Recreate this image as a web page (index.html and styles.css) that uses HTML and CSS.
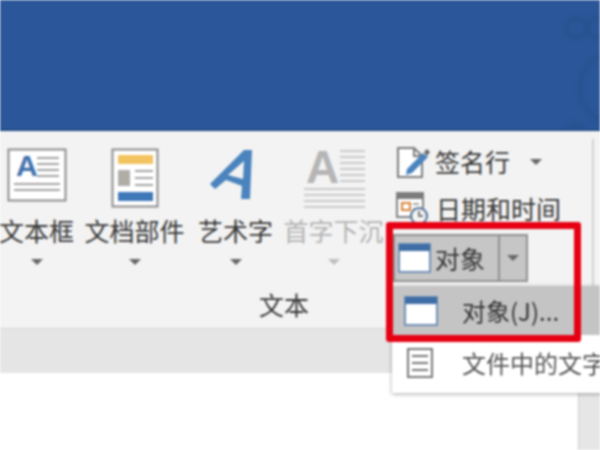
FILE: index.html
```html
<!DOCTYPE html>
<html lang="zh-CN">
<head>
<meta charset="utf-8">
<title>Word</title>
<link rel="stylesheet" href="styles.css">
</head>
<body>
<div class="app">
  <header class="titlebar">
    <svg class="pattern" width="90" height="131" viewBox="0 0 90 131"><g fill="none" stroke="#28528f" stroke-width="5"><circle cx="66" cy="28" r="10"/><circle cx="88" cy="28" r="10"/><circle cx="106" cy="88" r="36"/><circle cx="66" cy="132" r="8"/></g></svg>
  </header>
  <section class="ribbon">
    <div class="group">
      <div class="tools">
        <div class="tool tool-box">
          <div class="tool-icon">
            <svg width="60" height="54" viewBox="0 0 60 54"><rect x="1.5" y="1.5" width="57" height="51" fill="#fff" stroke="#8b8b8b" stroke-width="2"/><text class="svg-a" x="9" y="28" fill="#3f70ad">A</text><path d="M30 10h22M30 16h22M30 22h22M30 28h22M7 36h46M7 42h46" stroke="#a3a3a3" stroke-width="2"/></svg>
          </div>
          <span class="tool-label">文本框</span><i class="caret"></i>
        </div>
        <div class="tool tool-parts">
          <div class="tool-icon">
            <svg width="48" height="60" viewBox="0 0 48 60"><rect x="1.5" y="1.5" width="45" height="57" fill="#fff" stroke="#8b8b8b" stroke-width="2"/><rect x="7" y="7" width="35" height="9" fill="#f2c35f"/><rect x="7" y="22" width="12" height="16" fill="#b0aca6"/><path d="M24 23h18M24 30h18M24 37h18" stroke="#a3a3a3" stroke-width="2"/><rect x="7" y="44" width="35" height="9" fill="#3f78b8"/></svg>
          </div>
          <span class="tool-label">文档部件</span><i class="caret"></i>
        </div>
        <div class="tool tool-art">
          <div class="tool-icon">
            <svg class="art-icon" width="46" height="54" viewBox="0 0 46 54"><path d="M2 36 L36 2 H44 L42 51 H33 L34 38 L18 32 L7 41 Z M20 27 L35 31 L36 13 Z" fill="#4a83bd" fill-rule="evenodd"/></svg>
          </div>
          <span class="tool-label">艺术字</span><i class="caret"></i>
        </div>
        <div class="tool tool-drop tool-off">
          <div class="tool-icon">
            <svg class="drop-icon" width="62" height="60" viewBox="0 0 62 60"><text class="svg-drop" x="3" y="35" fill="#b5b5b5">A</text><path d="M37 3h25M37 9h25M37 15h25M37 21h25M37 27h25M37 33h25M1 41h61M1 47h61M1 53h61M1 59h61" stroke="#cacaca" stroke-width="2"/></svg>
          </div>
          <span class="tool-label">首字下沉</span><i class="caret"></i>
        </div>
        <div class="side-tools">
          <div class="side-row">
            <svg class="side-icon" width="34" height="34" viewBox="0 0 34 34"><path d="M2 3h16l8 8v21H2z" fill="#fff" stroke="#7b7b7b" stroke-width="2"/><path d="M18 3v8h8" fill="none" stroke="#7b7b7b" stroke-width="2"/><path d="M11 24 L27 8 l5 4 L16 28 l-6 2z" fill="#4a83bd"/><path d="M28 7l3-3 3 3-3 4z" fill="#666"/></svg>
            <span class="side-text">签名行</span><i class="caret caret-inline"></i>
          </div>
          <div class="side-row side-row-date">
            <svg class="side-icon" width="34" height="34" viewBox="0 0 34 34"><rect x="1" y="2" width="26" height="24" fill="#fff" stroke="#808080" stroke-width="2"/><rect x="1" y="2" width="26" height="6" fill="#7c7c7c"/><rect x="6" y="12" width="8" height="7" fill="none" stroke="#d9843b" stroke-width="2"/><path d="M17 13h6M17 18h6" stroke="#a0a0a0" stroke-width="2"/><circle cx="23" cy="25" r="8" fill="#f3f3f3" stroke="#4d6f96" stroke-width="2"/><path d="M23 20v5h4" fill="none" stroke="#555" stroke-width="1.5"/></svg>
            <span class="side-text">日期和时间</span>
          </div>
          <div class="split">
            <div class="split-main">
              <svg class="object-icon" width="33" height="30" viewBox="0 0 33 30"><rect x="1" y="1" width="31" height="28" fill="#fff" stroke="#6f8fb5" stroke-width="2"/><rect x="1" y="1" width="31" height="7" fill="#3f6ea6"/></svg>
              <span class="side-text">对象</span>
            </div>
            <div class="split-arrow"><i class="caret"></i></div>
          </div>
        </div>
      </div>
      <div class="group-label">文本</div>
    </div>
    <div class="divider"></div>
  </section>
  <div class="strip"></div>
  <main class="workspace">
    <div class="page"></div>
    <div class="side-gutter"></div>
  </main>

  <div class="menu">
    <div class="menu-item menu-item-on">
      <svg class="menu-icon" width="34" height="30" viewBox="0 0 34 30"><rect x="1" y="1" width="32" height="28" fill="#fff" stroke="#6f8fb5" stroke-width="2"/><rect x="1" y="1" width="32" height="7" fill="#3f6ea6"/></svg>
      <span class="menu-text">对象(J)...</span>
    </div>
    <div class="menu-item menu-item-file">
      <svg class="menu-icon menu-icon-doc" width="26" height="30" viewBox="0 0 26 30"><rect x="1" y="1" width="24" height="28" fill="#fff" stroke="#777" stroke-width="2"/><path d="M5 8h16M5 15h16M5 22h16" stroke="#777" stroke-width="2"/></svg>
      <span class="menu-text">文件中的文字</span>
    </div>
  </div>
  <div class="highlight"></div>
</div>
</body>
</html>
```
FILE: styles.css
```css
* { box-sizing: border-box; }
html, body { margin: 0; padding: 0; background: #fff; }
body { font-family: "Noto Sans CJK SC", "Liberation Sans", sans-serif; overflow: hidden; }
.app { position: relative; width: 600px; height: 450px; overflow: hidden; display: flex; flex-direction: column; filter: blur(0.8px); }

.titlebar { position: relative; height: 131px; flex: none; background: #2b579a; border-bottom: 2px solid #214a86; overflow: hidden; }
.pattern { position: absolute; right: 0; top: 0; filter: blur(2px); }

.ribbon { height: 197px; flex: none; display: flex; background: #f3f3f3; padding-top: 8px; }
.group { width: 604px; margin-left: -12px; padding-right: 12px; display: flex; flex-direction: column; flex: none; }
.tools { display: flex; height: 151px; }
.tool { flex: none; display: flex; flex-direction: column; align-items: center; padding-top: 7px; }
.tool-box { width: 97px; }
.tool-parts { width: 99px; }
.tool-art { width: 103px; }
.tool-drop { width: 93px; }
.tool-icon { height: 69px; display: flex; align-items: flex-start; justify-content: center; padding-top: 2px; }
.art-icon { margin-right: 10px; }
.drop-icon { overflow: visible; }
.tool-label { font-size: 25px; line-height: 30px; color: #363636; white-space: nowrap; font-weight: 400; }
.tool-off .tool-label { color: #b4b4b4; }
.caret { display: block; width: 0; height: 0; border-left: 6px solid transparent; border-right: 6px solid transparent; border-top: 6px solid #666; margin-top: 14px; }
.tool-off .caret { border-top-color: #bdbdbd; }
.caret-inline { margin: 0 0 0 20px; }
.svg-a { font: bold 30px "Liberation Sans", sans-serif; }
.svg-drop { font: bold 46px "Liberation Sans", sans-serif; }

.side-tools { margin-left: 13px; width: 180px; flex: none; }
.side-row { height: 46px; display: flex; align-items: center; padding-left: 3px; }
.side-row:first-child .side-text { margin-top: -3px; }
.side-row-date .side-text { margin-left: 1px; }
.side-icon { flex: none; margin-right: 5px; }
.side-text { font-size: 25px; line-height: 30px; color: #363636; white-space: nowrap; }
.split { display: flex; height: 48px; margin-top: 3px; }
.split-main { width: 107px; background: #c6c6c6; border: 2px solid #909090; display: flex; align-items: center; padding-left: 3px; gap: 4px; }
.split-arrow { width: 28px; background: #c6c6c6; border: 2px solid #909090; border-left: 0; display: flex; align-items: center; justify-content: center; }
.split-arrow .caret { margin: 0; }

.group-label { font-size: 25px; line-height: 34px; text-align: center; color: #363636; margin-top: -3px; }
.divider { width: 2px; height: 160px; background: #d2d2d2; flex: none; }

.strip { height: 45px; flex: none; background: #e5e5e5; border-top: 1px solid #d8d8d8; }
.workspace { flex: 1; display: flex; background: #fff; }
.page { flex: 1; background: #fff; }
.side-gutter { width: 22px; background: #e6e6e6; border-left: 1px solid #cfcfcf; }

.menu { position: absolute; left: 392px; top: 286px; width: 230px; height: 107px; background: #fff; box-shadow: 0 1px 4px rgba(0,0,0,.35); }
.menu-item { display: flex; align-items: center; padding-left: 12px; }
.menu-item-file { height: 54px; padding-bottom: 4px; margin-top: 3px; }
.menu-item-on { height: 49px; background: #c4c4c4; }
.menu-icon { flex: none; margin-right: 24px; }
.menu-icon-doc { margin-left: 3px; margin-right: 29px; }
.menu-text { font-size: 24px; line-height: 30px; color: #555; white-space: nowrap; }
.menu-item-on .menu-text { color: #333; }

.highlight { position: absolute; left: 386px; top: 222px; width: 195px; height: 120px; border: 7px solid #e60012; border-radius: 3px; }
```
